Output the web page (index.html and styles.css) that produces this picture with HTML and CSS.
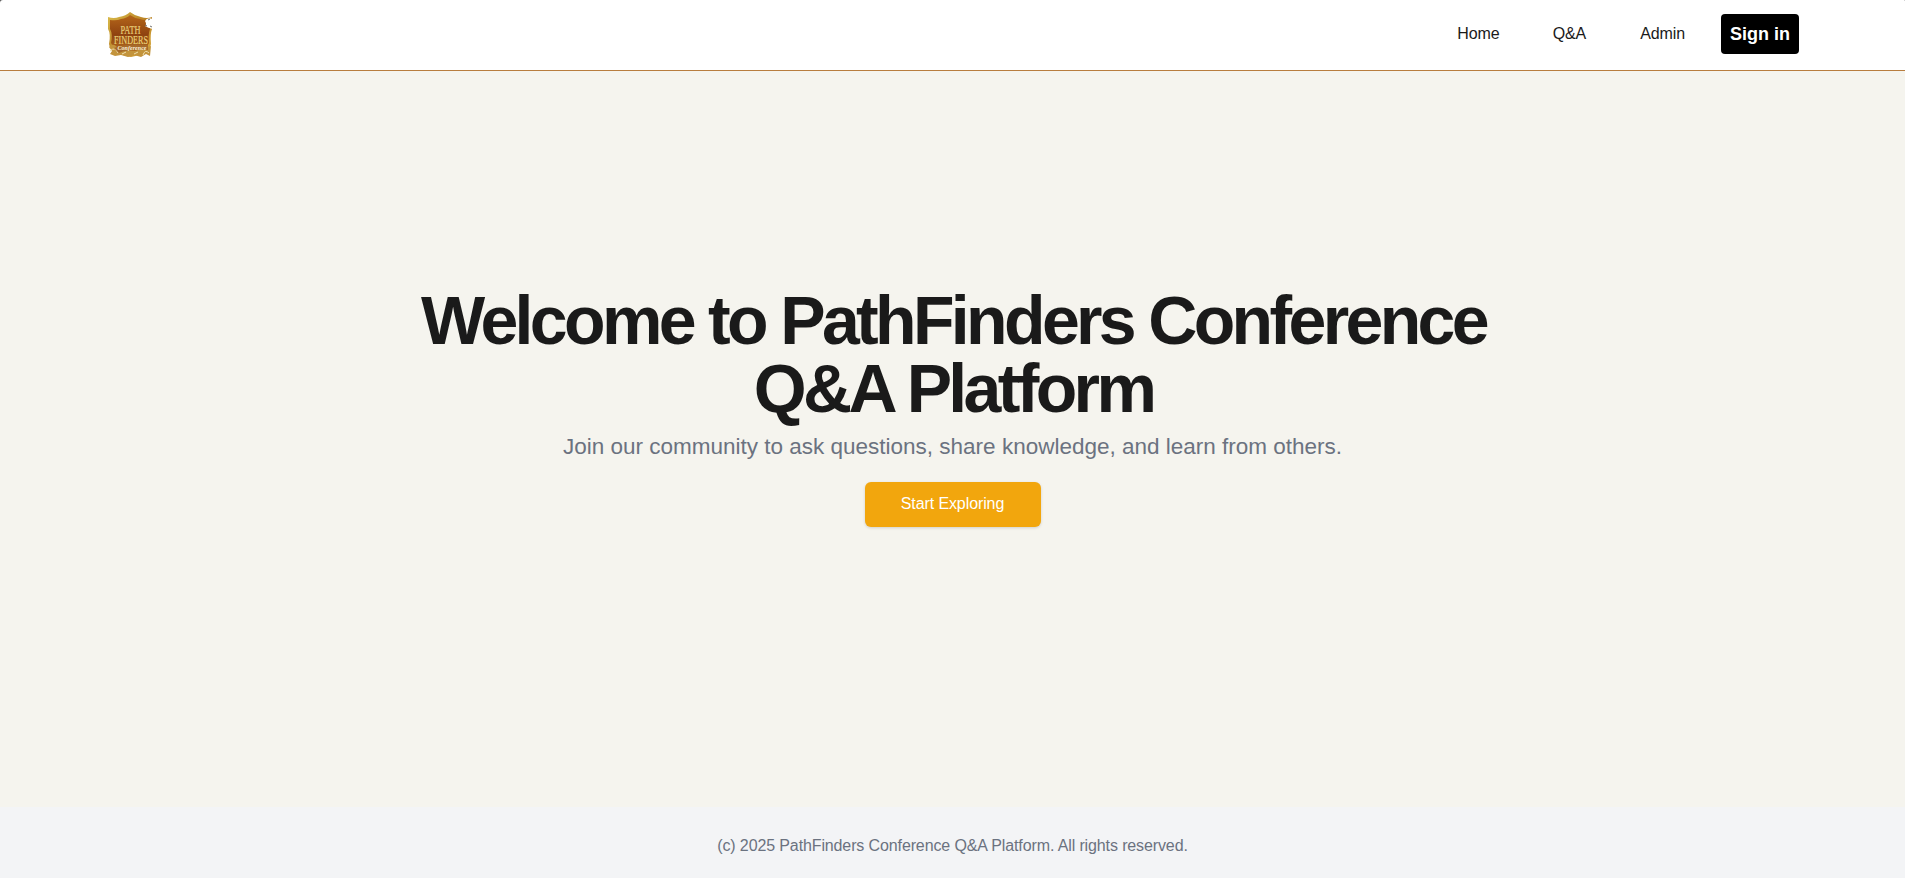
FILE: index.html
```html
<!DOCTYPE html>
<html lang="en">
<head>
<meta charset="utf-8">
<title>PathFinders Conference Q&amp;A Platform</title>
<link rel="stylesheet" href="styles.css">
</head>
<body>
<header class="header">
  <a class="brand" href="#" aria-label="PathFinders">
    <svg class="logo" viewBox="0 0 46 46">
      <defs>
        <linearGradient id="gold" x1="0" y1="0" x2="1" y2="1">
          <stop offset="0" stop-color="#dcc04e"/><stop offset=".5" stop-color="#b98225"/><stop offset="1" stop-color="#dcb040"/>
        </linearGradient>
        <linearGradient id="shield" x1="0" y1="0" x2="0" y2="1">
          <stop offset="0" stop-color="#b5661a"/><stop offset=".5" stop-color="#8f4310"/><stop offset="1" stop-color="#b87222"/>
        </linearGradient>
      </defs>
      <path d="M1 5Q7 7 12 5Q19 4 23 0Q28 4 34 5Q40 7 45 5V17Q43 22 44 32Q43 41 24 45Q3 41 2 32Q4 22 1 17Z" fill="url(#gold)"/>
      <path d="M3 8Q10 9 14 7Q20 6 23 3Q27 6 33 7Q38 9 43 8V17Q41 22 42 31Q40 38 24 42Q7 38 4 31Q6 22 3 17Z" fill="url(#shield)"/>
      <path d="M2 35Q5 31 9 34L13 39L20 38L28 39L38 36L44 34L43 44L39 42L34 45L27 43L21 45L14 43L8 44L3 42L5 39Z" fill="#c3943c"/>
      <path d="M3 39Q8 34 11 41M15 42L19 40M27 42L31 40M36 43Q38 37 42 41" fill="none" stroke="#f0dfad"/>
      <text class="logo-title" x="23.500" y="21.500" textLength="20" lengthAdjust="spacingAndGlyphs">PATH</text>
      <text class="logo-title" x="24" y="31.500" textLength="34" lengthAdjust="spacingAndGlyphs">FINDERS</text>
      <path d="M7 36Q18 31 41 33V38Q20 37 12 41Z" fill="#a66a2b"/>
      <text class="logo-script" x="25" y="38" textLength="29">Conference</text>
      <path d="M38 9Q40 5 45.500 7V17Q41 16 38 14Q40 12 38 9Z" fill="#fff"/>
      <path d="M41 8L43 7M38 13L40 14M43 14L45 15" stroke="#333" stroke-width=".7"/>
    </svg>
  </a>
  <nav class="nav">
    <a class="nav-link" href="#">Home</a>
    <a class="nav-link" href="#">Q&amp;A</a>
    <a class="nav-link" href="#">Admin</a>
    <a class="sign-in" href="#">Sign in</a>
  </nav>
</header>
<main class="hero">
  <h1 class="hero-title">Welcome to PathFinders Conference<br>Q&amp;A Platform</h1>
  <p class="hero-text">Join our community to ask questions, share knowledge, and learn from others.</p>
  <a class="hero-button" href="#">Start Exploring</a>
</main>
<footer class="footer">(c) 2025 PathFinders Conference Q&amp;A Platform. All rights reserved.</footer>
</body>
</html>
```

FILE: styles.css
```css
* { box-sizing: border-box; }

body {
  margin: 0;
  height: 100vh;
  display: flex;
  flex-direction: column;
  overflow: hidden;
  background: #555;
  color: #1a1a1a;
  font: 16px/24px "Liberation Sans", Arial, sans-serif;
}

a { color: inherit; text-decoration: none; }

.header {
  height: 71px;
  flex: none;
  display: flex;
  align-items: center;
  justify-content: space-between;
  padding: 0 106px 0 107px;
  background: #fff;
  border-bottom: 1px solid #b87d3e;
  border-top-left-radius: 3px;
  border-top-right-radius: 1px;
}

.brand { display: flex; }
.logo { width: 46px; height: 46px; overflow: visible; }
.logo-title { font: 13px "Liberation Serif", serif; fill: #ead37b; stroke: #ead37b; stroke-width: .2px; text-anchor: middle; }
.logo-script { font: italic bold 6px "Liberation Serif", serif; fill: #fbf3da; text-anchor: middle; }

.nav { display: flex; align-items: center; padding-bottom: 2px; }
.nav-link { margin-right: 54px; letter-spacing: -.1px; }
.nav-link:first-child { margin-right: 53px; }
.nav-link:nth-child(3) { margin-right: 36px; }

.sign-in {
  width: 78px;
  height: 40px;
  border-radius: 4px;
  background: #000;
  color: #fff;
  font-size: 18px;
  font-weight: 700;
  line-height: 40px;
  text-align: center;
}

.hero {
  flex: 1;
  display: flex;
  flex-direction: column;
  align-items: center;
  padding-top: 215px;
  background: #f5f4ee;
}

.hero-title {
  margin: 0;
  padding-left: 2px;
  font-size: 68px;
  line-height: 68px;
  letter-spacing: -3.65px;
  text-align: center;
}

.hero-text {
  margin: 9px 0 19px;
  color: #6b7280;
  font-size: 22.5px;
  line-height: 32px;
  white-space: nowrap;
}

.hero-button {
  width: 176px;
  height: 45px;
  border-radius: 6px;
  background: #f2a60d;
  box-shadow: 0 1px 3px rgba(0, 0, 0, .15);
  color: #fff;
  letter-spacing: -.1px;
  line-height: 43px;
  text-align: center;
}

.footer {
  height: 71px;
  flex: none;
  background: #f3f4f6;
  color: #6b7280;
  letter-spacing: -.12px;
  line-height: 77px;
  text-align: center;
}
```
